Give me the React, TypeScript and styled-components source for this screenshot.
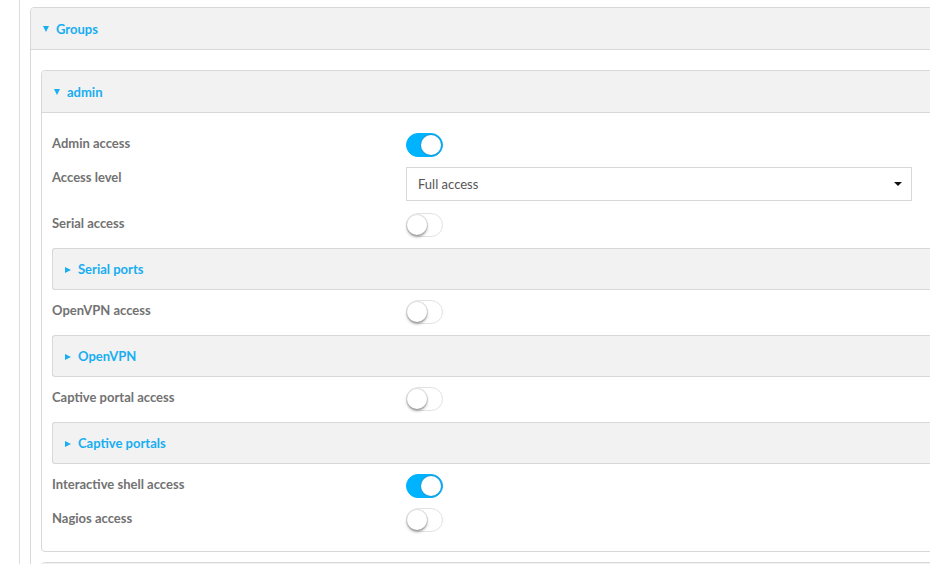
import styled, { createGlobalStyle } from "styled-components";

const GlobalStyle = createGlobalStyle`
  html, body {
    margin: 0;
    padding: 0;
    background: #ffffff;
    overflow: hidden;
  }
  body {
    font-family: Lato, "Open Sans", "Liberation Sans", sans-serif;
    font-size: 13px;
  }
`;

const BLUE = "#17aef2";
const LINE = "#d8d8d8";

type Group = { label: string; kind: "toggle" | "select" | "panel"; on?: boolean; value?: string };

const rows: Group[] = [
  { label: "Admin access", kind: "toggle", on: true },
  { label: "Access level", kind: "select", value: "Full access" },
  { label: "Serial access", kind: "toggle", on: false },
  { label: "Serial ports", kind: "panel" },
  { label: "OpenVPN access", kind: "toggle", on: false },
  { label: "OpenVPN", kind: "panel" },
  { label: "Captive portal access", kind: "toggle", on: false },
  { label: "Captive portals", kind: "panel" },
  { label: "Interactive shell access", kind: "toggle", on: true },
  { label: "Nagios access", kind: "toggle", on: false },
];

export default function App() {
  return (
    <>
      <GlobalStyle />
      <Page>
        <Panel $stretch>
          <Header>
            <DownArrow />
            <Title>Groups</Title>
          </Header>
          <GroupsBody>
            <Panel>
              <Header>
                <DownArrow />
                <Title>admin</Title>
              </Header>
              <AdminBody>
                {rows.map((r) =>
                  r.kind === "panel" ? (
                    <SubPanel key={r.label}>
                      <RightArrow />
                      <Title>{r.label}</Title>
                    </SubPanel>
                  ) : (
                    <Row key={r.label} $extra={r.kind === "select" ? 2 : 0}>
                      <Label>{r.label}</Label>
                      {r.kind === "toggle" ? (
                        <Switch $on={!!r.on}>
                          <Knob $on={!!r.on} />
                        </Switch>
                      ) : (
                        <Select>
                          <span>{r.value}</span>
                          <Caret />
                        </Select>
                      )}
                    </Row>
                  )
                )}
              </AdminBody>
            </Panel>
            <Panel>
              <Header />
            </Panel>
          </GroupsBody>
        </Panel>
      </Page>
    </>
  );
}

const Page = styled.div`
  margin-left: 19px;
  min-height: 100vh;
  border-left: 1px solid #dcdcdc;
  padding: 7px 0 0 10px;
`;

const Panel = styled.div<{ $stretch?: boolean }>`
  border: 1px solid ${LINE};
  border-radius: 4px;
  background: #fff;
  margin-right: ${(p) => (p.$stretch ? "-40px" : "0")};
  margin-bottom: 10px;
`;

const Header = styled.div`
  height: 41px;
  display: flex;
  align-items: center;
  padding: 0 12px;
  background: #f2f2f2;
  border-bottom: 1px solid ${LINE};
  border-radius: 4px 4px 0 0;
`;

// arrows are drawn with borders so the size is exact
const DownArrow = styled.span`
  width: 0;
  height: 0;
  border-left: 3.5px solid transparent;
  border-right: 3.5px solid transparent;
  border-top: 6px solid ${BLUE};
  margin-right: 7px;
  margin-top: 1px;
`;

const RightArrow = styled.span`
  width: 0;
  height: 0;
  border-top: 3px solid transparent;
  border-bottom: 3px solid transparent;
  border-left: 6px solid ${BLUE};
  margin-right: 7px;
  margin-top: 1px;
`;

const Title = styled.span`
  color: ${BLUE};
  font-size: 13px;
  font-weight: 700;
`;

const GroupsBody = styled.div`
  padding: 20px 0 0 10px;
`;

const AdminBody = styled.div`
  display: flex;
  flex-direction: column;
  gap: 10px;
  padding: 20px 0 19px 10px;
`;

const Row = styled.div<{ $extra: number }>`
  display: flex;
  align-items: flex-start;
  margin-bottom: ${(p) => p.$extra}px;
`;

const Label = styled.div`
  width: 354px;
  flex-shrink: 0;
  line-height: 20px;
  color: #727272;
  font-weight: 700;
  font-size: 13px;
`;

const Switch = styled.div<{ $on: boolean }>`
  position: relative;
  box-sizing: border-box;
  width: 37px;
  height: 24px;
  border-radius: 12px;
  background: ${(p) => (p.$on ? "#00b3ff" : "#ffffff")};
  border: 1px solid ${(p) => (p.$on ? "#00b3ff" : "#e2e2e2")};
`;

const Knob = styled.span<{ $on: boolean }>`
  position: absolute;
  top: 1px;
  left: ${(p) => (p.$on ? "14px" : "0px")};
  width: 20px;
  height: 20px;
  border-radius: 50%;
  background: #fff;
  box-shadow: ${(p) =>
    p.$on ? "0 0 0 1px #1a9fe0" : "0 2px 3px rgba(0,0,0,0.35), 0 0 0 1px #e4e4e4"};
`;

const Select = styled.div`
  box-sizing: border-box;
  width: 506px;
  height: 34px;
  border: 1px solid ${LINE};
  display: flex;
  align-items: center;
  justify-content: space-between;
  padding: 0 9px 0 11px;
  color: #555;
  font-size: 13px;
`;

const Caret = styled.span`
  width: 0;
  height: 0;
  border-left: 4px solid transparent;
  border-right: 4px solid transparent;
  border-top: 4px solid #111;
`;

const SubPanel = styled.div`
  box-sizing: border-box;
  height: 42px;
  margin-top: 1px;
  display: flex;
  align-items: center;
  padding: 0 12px;
  background: #f2f2f2;
  border: 1px solid ${LINE};
  border-right: none;
  border-radius: 3px 0 0 3px;
`;
